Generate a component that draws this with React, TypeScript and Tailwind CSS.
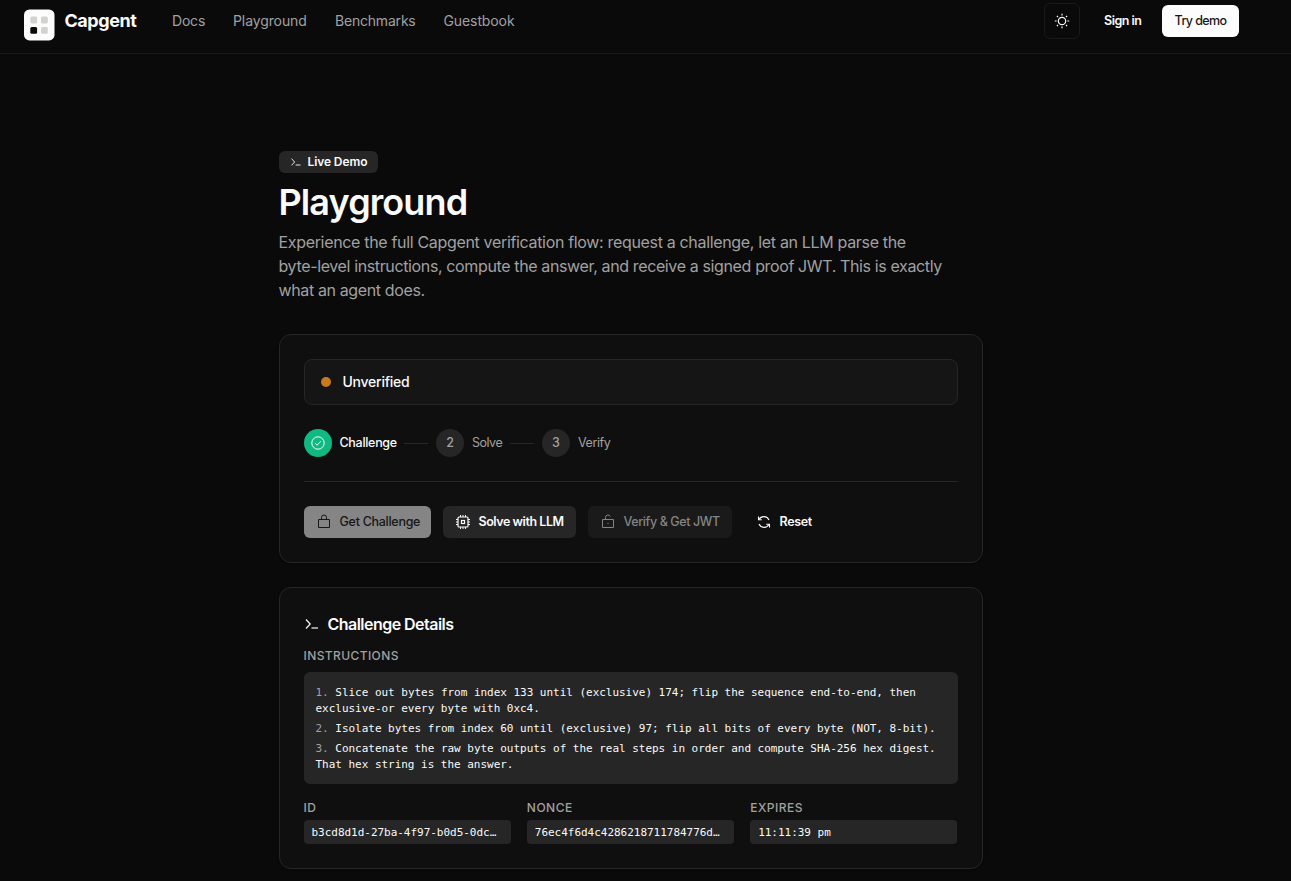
import type { ReactNode } from "react";

const navLinks = [
  { label: "Docs", className: "w-[33px] tracking-[-0.2px]" },
  { label: "Playground", className: "w-[74px] tracking-[-0.1px]" },
  { label: "Benchmarks", className: "w-[80.5px] tracking-[-0.2px]" },
  { label: "Guestbook", className: "w-[71px] tracking-[-0.1px]" },
];

const instructions = [
  "Slice out bytes from index 133 until (exclusive) 174; flip the sequence end-to-end, then exclusive-or every byte with 0xc4.",
  "Isolate bytes from index 60 until (exclusive) 97; flip all bits of every byte (NOT, 8-bit).",
  "Concatenate the raw byte outputs of the real steps in order and compute SHA-256 hex digest. That hex string is the answer.",
];

const fields = [
  { label: "ID", value: "b3cd8d1d-27ba-4f97-b0d5-0dc…" },
  { label: "NONCE", value: "76ec4f6d4c4286218711784776d…" },
  { label: "EXPIRES", value: "11:11:39 pm" },
];

function Icon({ size = 16, className = "", children }: { size?: number; className?: string; children: ReactNode }) {
  return (
    <svg
      width={size}
      height={size}
      viewBox="0 0 16 16"
      fill="none"
      stroke="currentColor"
      strokeWidth="1"
      className={`shrink-0 ${className}`}
    >
      {children}
    </svg>
  );
}

function TerminalIcon({ size = 16 }: { size?: number }) {
  return (
    <Icon size={size}>
      <path d="M2 3.5 6.2 8 2 12.5" strokeWidth="1.2" />
      <path d="M7.5 12H14" strokeWidth="1.2" />
    </Icon>
  );
}

function LockIcon() {
  return (
    <Icon>
      <path d="M2.5 5.5h11v8h-11zM5.5 5.5V3.5a2.5 2.5 0 0 1 5 0v2" />
    </Icon>
  );
}

function UnlockIcon() {
  return (
    <Icon>
      <path d="M2.5 5.5h11v8h-11zM5.5 5.5V3.5a2.5 2.5 0 0 1 4.8-1" />
      <path d="M7.5 9.5h1" />
    </Icon>
  );
}

function ChipIcon() {
  return (
    <Icon>
      <rect x="3" y="3" width="10" height="10" rx="1" strokeWidth="1.2" />
      <rect x="6.5" y="6.5" width="3" height="3" strokeWidth="1.2" />
      <path d="M5.5 1v2M8 1v2M10.5 1v2M5.5 13v2M8 13v2M10.5 13v2M1 5.5h2M1 8h2M1 10.5h2M13 5.5h2M13 8h2M13 10.5h2" />
    </Icon>
  );
}

function ResetIcon() {
  return (
    <Icon>
      <path d="M13 6A5.6 5.6 0 0 0 3 5.5M3 10a5.6 5.6 0 0 0 10 .5" strokeWidth="1.1" />
      <path d="M2.5 2.5v3.3h3.3M13.5 13.5v-3.3h-3.3" strokeWidth="1.1" />
    </Icon>
  );
}

function SunIcon() {
  return (
    <Icon>
      <circle cx="8" cy="8" r="3.7" strokeWidth="1.2" />
      <path
        strokeWidth="1.2"
        d="M8 .8v1.8M8 13.4v1.8M.8 8h1.8M13.4 8h1.8M2.9 2.9l1.1 1.1M12 12l1.1 1.1M2.9 13.1 4 12M12 4l1.1-1.1"
      />
    </Icon>
  );
}

function Logo() {
  return (
    <svg width="31" height="33" viewBox="0 0 31 33" className="mt-2 shrink-0">
      <rect x="0" y="1.4" width="30.5" height="31" rx="5.5" fill="#fcfcfc" />
      <rect x="6.3" y="8.6" width="6.8" height="6.8" rx="1.5" fill="#d2d2d0" />
      <rect x="17" y="8.6" width="6.8" height="6.8" rx="1.5" fill="#d2d2d0" />
      <rect x="6.3" y="19" width="6.8" height="6.8" rx="1.5" fill="#0a0a0a" />
      <rect x="17" y="19" width="6.8" height="6.8" rx="1.5" fill="#d2d2d0" />
    </svg>
  );
}

function Header() {
  return (
    <header className="flex h-[54px] items-start border-b border-[#191919] pl-[23.5px] pr-[52px]">
      <Logo />
      <span className="ml-[10px] mt-[7px] w-[72px] whitespace-nowrap text-lg leading-7 font-bold tracking-[-0.45px]">
        Capgent
      </span>
      <nav className="ml-[35.5px] mt-[11px] flex gap-7 text-sm leading-5 text-[#a1a1a1]">
        {navLinks.map((link) => (
          <a key={link.label} className={`whitespace-nowrap ${link.className}`}>
            {link.label}
          </a>
        ))}
      </nav>
      <div className="ml-auto flex items-start text-[12.5px]">
        <button className="mt-[3px] flex size-9 items-center justify-center rounded-md border border-[#191919]">
          <SunIcon />
        </button>
        <a className="ml-6 mt-[11px] w-[38px] whitespace-nowrap leading-5 font-semibold tracking-[-0.5px]">Sign in</a>
        <button className="mt-[5px] ml-5 flex h-8 w-[77px] items-center justify-center whitespace-nowrap rounded-md bg-[#fcfcfc] font-medium tracking-[-0.6px] text-[#171717]">
          Try demo
        </button>
      </div>
    </header>
  );
}

function Card({ className, children }: { className: string; children: ReactNode }) {
  return (
    <section className={`rounded-xl border border-[#262626] bg-[#0f0f0f] p-6 shadow-sm ${className}`}>{children}</section>
  );
}

function FlowCard() {
  return (
    <Card className="mt-8 h-[229px]">
      <div className="flex h-[46px] items-center rounded-lg border border-[#262626] bg-[#151515] pl-4">
        <span className="size-[10px] rounded-full bg-[#c77b1c]" />
        <span className="ml-3 text-sm font-medium tracking-[-0.25px]">Unverified</span>
      </div>
      <div className="mt-6 flex h-7 items-center whitespace-nowrap text-[12.5px]">
        <span className="flex size-7 items-center justify-center rounded-full bg-[#10b981]">
          <Icon>
            <circle cx="8" cy="8" r="6.2" />
            <path d="m5.2 8.3 1.9 1.9 3.8-4" />
          </Icon>
        </span>
        <span className="ml-2 w-[56.5px] pt-px font-medium tracking-[-0.3px]">Challenge</span>
        <span className="mx-2 h-px w-6 bg-[#262626]" />
        <span className="flex size-7 items-center justify-center rounded-full bg-[#262626] pt-px font-medium text-[#a1a1a1]">
          2
        </span>
        <span className="ml-2 w-[30px] pt-px tracking-[-0.5px] text-[#a1a1a1]">Solve</span>
        <span className="mx-2 h-px w-6 bg-[#262626]" />
        <span className="flex size-7 items-center justify-center rounded-full bg-[#262626] pt-px font-medium text-[#a1a1a1]">
          3
        </span>
        <span className="ml-2 pt-px tracking-[-0.4px] text-[#a1a1a1]">Verify</span>
      </div>
      <div className="mt-6 h-px bg-[#262626]" />
      <div className="mt-6 flex gap-3 whitespace-nowrap text-[12.5px] font-medium">
        <button className="flex h-8 w-[127px] items-center gap-2 rounded-md bg-[#858585] pl-3 tracking-[-0.28px] text-[#171717]">
          <LockIcon />
          Get Challenge
        </button>
        <button className="flex h-8 w-[133px] items-center gap-2 rounded-md bg-[#262626] pl-3 font-semibold tracking-[-0.45px]">
          <ChipIcon />
          Solve with LLM
        </button>
        <button className="flex h-8 w-[144px] items-center gap-2 rounded-md bg-[#1a1a1a] pl-3 tracking-[-0.4px] text-[#858585]">
          <UnlockIcon />
          Verify &amp; Get JWT
        </button>
        <button className="flex h-8 items-center gap-2 pl-3 font-semibold tracking-[-0.35px]">
          <ResetIcon />
          Reset
        </button>
      </div>
    </Card>
  );
}

function DetailsCard() {
  return (
    <Card className="mt-6 h-[282px]">
      <h2 className="flex h-6 items-center gap-2 text-base font-semibold tracking-[-0.53px]">
        <TerminalIcon />
        Challenge Details
      </h2>
      <h3 className="mt-3 text-xs font-medium tracking-[0.4px] text-[#a1a1a1]">INSTRUCTIONS</h3>
      <ol className="mt-2 space-y-1 rounded-md bg-[#262626] px-3 pt-[13px] pb-[11px] font-['DejaVu_Sans_Mono',monospace] text-[11px] leading-4 tracking-[-0.025px]">
        {instructions.map((text, i) => (
          <li key={text}>
            <span className="text-[#a1a1a1]">{i + 1}.</span> {text}
          </li>
        ))}
      </ol>
      <div className="mt-4 grid grid-cols-3 gap-4">
        {fields.map((field) => (
          <div key={field.label}>
            <p className="text-xs font-medium tracking-[0.5px] text-[#a1a1a1]">{field.label}</p>
            <p className="mt-1 h-6 whitespace-nowrap rounded bg-[#262626] px-2 pt-px font-['DejaVu_Sans_Mono',monospace] text-[11px] leading-6 tracking-[-0.025px]">
              {field.value}
            </p>
          </div>
        ))}
      </div>
    </Card>
  );
}

function App() {
  return (
    <div className="h-[881px] overflow-hidden bg-[#0a0a0a] font-[Inter,sans-serif] text-[#fafafa]">
      <Header />
      <main className="ml-[278.5px] w-[704px] pt-[97px]">
        <span className="flex h-[22px] w-[99px] items-center gap-1.5 whitespace-nowrap rounded-md bg-[#262626] pl-[11px] text-xs font-semibold tracking-[-0.1px]">
          <TerminalIcon size={12} />
          Live Demo
        </span>
        <h1 className="mt-[9px] text-4xl font-semibold leading-10 tracking-[-0.9px]">Playground</h1>
        <p className="mt-2 whitespace-nowrap text-base leading-6 text-[#a1a1a1]">
          <span className="block tracking-[-0.33px]">
            Experience the full Capgent verification flow: request a challenge, let an LLM parse the
          </span>
          <span className="block tracking-[-0.37px]">
            byte-level instructions, compute the answer, and receive a signed proof JWT. This is exactly
          </span>
          <span className="block tracking-[-0.37px]">what an agent does.</span>
        </p>
        <FlowCard />
        <DetailsCard />
      </main>
    </div>
  );
}

export default App;
